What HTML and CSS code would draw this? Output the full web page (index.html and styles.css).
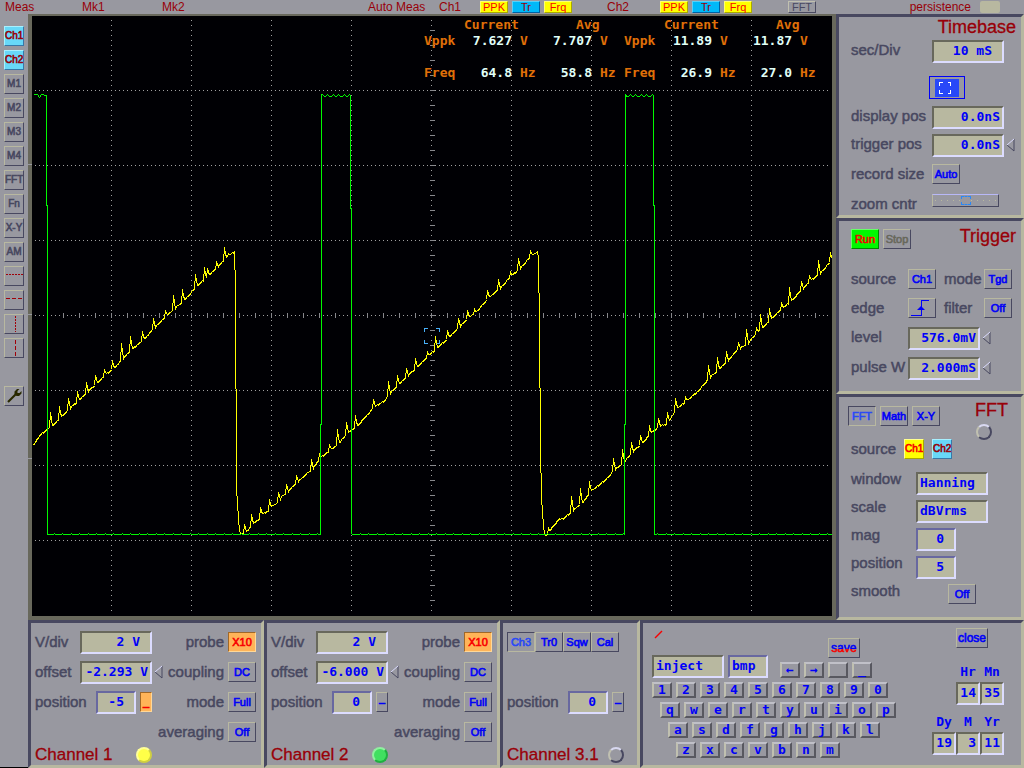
FILE: index.html
```html
<!DOCTYPE html>
<html lang="en">
<head>
  <meta charset="UTF-8">
  <title>Oscilloscope</title>
  <link rel="stylesheet" href="styles.css">
</head>
<body>
  <div class="scope">
    <header class="topbar">
      <span>Meas</span>
      <span>Mk1</span>
      <span>Mk2</span>
      <span>Auto Meas</span>
      <div class="meas-group">
        <span>Ch1</span>
        <button type="button" class="tag yellow">PPK</button>
        <button type="button" class="tag blue">Tr</button>
        <button type="button" class="tag yellow">Frq</button>
      </div>
      <div class="meas-group">
        <span>Ch2</span>
        <button type="button" class="tag yellow">PPK</button>
        <button type="button" class="tag blue">Tr</button>
        <button type="button" class="tag yellow">Frq</button>
      </div>
      <button type="button" class="tag">FFT</button>
      <div class="persist">
        <span>persistence</span>
        <button type="button" class="persist-box" aria-label="persistence"></button>
      </div>
    </header>

    <nav class="rail">
      <button type="button" class="btn tool cyan">Ch1</button>
      <button type="button" class="btn tool cyan">Ch2</button>
      <button type="button" class="btn tool">M1</button>
      <button type="button" class="btn tool">M2</button>
      <button type="button" class="btn tool">M3</button>
      <button type="button" class="btn tool">M4</button>
      <button type="button" class="btn tool">FFT</button>
      <button type="button" class="btn tool">Fn</button>
      <button type="button" class="btn tool">X-Y</button>
      <button type="button" class="btn tool">AM</button>
      <button type="button" class="btn tool" aria-label="Horizontal cursor 1">
        <svg width="18" height="18"><path class="cursor" d="M1 7.500H18" stroke-dasharray="2 1"/></svg>
      </button>
      <button type="button" class="btn tool" aria-label="Horizontal cursor 2">
        <svg width="18" height="18"><path class="cursor" d="M1 7.500H17" stroke-dasharray="4 2"/></svg>
      </button>
      <button type="button" class="btn tool" aria-label="Vertical cursor 1">
        <svg width="18" height="18"><path class="cursor" d="M10.500 1V17" stroke-dasharray="2 1"/></svg>
      </button>
      <button type="button" class="btn tool" aria-label="Vertical cursor 2">
        <svg width="18" height="18"><path class="cursor" d="M10.500 1V17" stroke-dasharray="4 2"/></svg>
      </button>
      <button type="button" class="btn tool setup" aria-label="Setup">
        <svg width="18" height="18"><path d="M3 15L11 7" stroke="#282800" stroke-width="2.200"/><path d="M9.500 7V4.500L12 2H14.500L12.500 4V6H14.500L16.500 4V6.500L14 9H11.500Z" fill="#282800"/></svg>
      </button>
    </nav>

    <main class="screen">
      <svg class="plot" viewBox="32 16 800 600" role="img" aria-label="Waveforms">
        <g id="grid" class="grid"></g>
        <path class="ticks" d="M432.500 30V612" stroke-dasharray="1 14"/>
        <path class="ticks" d="M47 315.500H828" stroke-dasharray="1 15"/>
        <path class="marker" d="M424.500 332V328.500H428M436 328.500H439.500V332M439.500 340V343.500H436M428 343.500H424.500V340"/>
        <polyline id="ch1" class="trace ch1"/>
        <polyline id="ch2" class="trace ch2"/>
      </svg>
      <div class="readouts">
        <table>
          <colgroup><col class="c-name"><col class="c-cur"><col class="c-unit"><col class="c-avg"><col class="c-unit"></colgroup>
          <tr><td></td><th colspan="2">Current</th><th colspan="2" class="avg">Avg</th></tr>
          <tr><th>Vppk</th><td>7.627</td><th>V</th><td>7.707</td><th>V</th></tr>
          <tr class="spaced"><th>Freq</th><td>64.8</td><th>Hz</th><td>58.8</td><th>Hz</th></tr>
        </table>
        <table>
          <colgroup><col class="c-name"><col class="c-cur"><col class="c-unit"><col class="c-avg"><col class="c-unit"></colgroup>
          <tr><td></td><th colspan="2">Current</th><th colspan="2" class="avg">Avg</th></tr>
          <tr><th>Vppk</th><td>11.89</td><th>V</th><td>11.87</td><th>V</th></tr>
          <tr class="spaced"><th>Freq</th><td>26.9</td><th>Hz</th><td>27.0</td><th>Hz</th></tr>
        </table>
      </div>
    </main>

    <aside class="side">
      <section class="panel timebase">
        <h2>Timebase</h2>
        <label for="secdiv">sec/Div</label>
        <input class="field inset-text" id="secdiv" value="10 mS">
        <button type="button" class="zoom-btn" aria-label="Zoom window">
          <svg width="24" height="18"><path d="M5 3.500H8M13 3.500H15.500V7M15.500 11V14.500H13M8 14.500H4.500V11M4.500 7V3" fill="none" stroke="#fff" shape-rendering="crispEdges"/></svg>
        </button>
        <label for="disppos">display pos</label>
        <input class="field" id="disppos" value="0.0nS">
        <label for="trigpos">trigger pos</label>
        <input class="field" id="trigpos" value="0.0nS">
        <svg class="arrow" width="10" height="14"><path d="M1 7L8 13V1" fill="none" stroke="#484860"/><path d="M1 7L8 1" stroke="#dcdcff"/></svg>
        <label for="recsize">record size</label>
        <button type="button" class="btn" id="recsize">Auto</button>
        <label for="zoomcntr">zoom cntr</label>
        <input type="range" id="zoomcntr" class="slider" min="0" max="100" value="50">
      </section>

      <section class="panel trigger">
        <div class="head">
          <button type="button" class="btn run">Run</button>
          <button type="button" class="btn stop">Stop</button>
          <h2>Trigger</h2>
        </div>
        <label for="tsource">source</label>
        <button type="button" class="btn" id="tsource">Ch1</button>
        <label for="tmode">mode</label>
        <button type="button" class="btn" id="tmode">Tgd</button>
        <label for="tedge">edge</label>
        <button type="button" class="btn" id="tedge" aria-label="rising edge">
          <svg width="24" height="18"><path d="M2 16.500H12V1.500H20" fill="none" stroke="#0000f8" shape-rendering="crispEdges"/><path d="M8 11L12 7L16 11Z" fill="#0000f8"/></svg>
        </button>
        <label for="tfilter">filter</label>
        <button type="button" class="btn" id="tfilter">Off</button>
        <label for="tlevel">level</label>
        <div class="wide">
          <input class="field" id="tlevel" value="576.0mV">
          <svg class="arrow" width="10" height="14"><path d="M1 7L8 13V1" fill="none" stroke="#484860"/><path d="M1 7L8 1" stroke="#dcdcff"/></svg>
        </div>
        <label for="tpulse">pulse W</label>
        <div class="wide">
          <input class="field" id="tpulse" value="2.000mS">
          <svg class="arrow" width="10" height="14"><path d="M1 7L8 13V1" fill="none" stroke="#484860"/><path d="M1 7L8 1" stroke="#dcdcff"/></svg>
        </div>
      </section>

      <section class="panel fft">
        <div class="head">
          <button type="button" class="btn active">FFT</button>
          <button type="button" class="btn">Math</button>
          <button type="button" class="btn">X-Y</button>
          <div class="fft-title">
            <h2>FFT</h2>
            <span class="led"></span>
          </div>
        </div>
        <div class="fft-source">
          <span class="label">source</span>
          <button type="button" class="btn tool yellow">Ch1</button>
          <button type="button" class="btn tool cyan">Ch2</button>
        </div>
        <div class="fft-rows">
          <label for="fwindow">window</label>
          <input class="field left" id="fwindow" value="Hanning">
          <label for="fscale">scale</label>
          <input class="field left" id="fscale" value="dBVrms">
          <label for="fmag">mag</label>
          <input class="field small inset-text" id="fmag" value="0">
          <label for="fpos">position</label>
          <input class="field small inset-text" id="fpos" value="5">
          <label for="fsmooth">smooth</label>
          <button type="button" class="btn smooth" id="fsmooth">Off</button>
        </div>
      </section>
    </aside>

    <footer class="bottom">
      <section class="panel channel">
        <div class="cols">
          <div class="col">
            <div class="row"><label for="c1div">V/div</label><input class="field inset-text" id="c1div" value="2 V"></div>
            <div class="row">
              <label for="c1off">offset</label><input class="field" id="c1off" value="-2.293 V">
              <svg class="arrow" width="10" height="14"><path d="M1 7L8 13V1" fill="none" stroke="#484860"/><path d="M1 7L8 1" stroke="#dcdcff"/></svg>
            </div>
            <div class="row"><label for="c1pos">position</label><input class="field small inset-text" id="c1pos" value="-5"><button type="button" class="btn minus orange">_</button></div>
          </div>
          <div class="col options">
            <div class="row"><label for="c1probe">probe</label><button type="button" class="btn orange" id="c1probe">X10</button></div>
            <div class="row"><label for="c1coup">coupling</label><button type="button" class="btn" id="c1coup">DC</button></div>
            <div class="row"><label for="c1mode">mode</label><button type="button" class="btn" id="c1mode">Full</button></div>
            <div class="row"><label for="c1avg">averaging</label><button type="button" class="btn" id="c1avg">Off</button></div>
          </div>
        </div>
        <div class="foot"><h2>Channel 1</h2><span class="led on-yellow"></span></div>
      </section>

      <section class="panel channel">
        <div class="cols">
          <div class="col">
            <div class="row"><label for="c2div">V/div</label><input class="field inset-text" id="c2div" value="2 V"></div>
            <div class="row">
              <label for="c2off">offset</label><input class="field" id="c2off" value="-6.000 V">
              <svg class="arrow" width="10" height="14"><path d="M1 7L8 13V1" fill="none" stroke="#484860"/><path d="M1 7L8 1" stroke="#dcdcff"/></svg>
            </div>
            <div class="row"><label for="c2pos">position</label><input class="field small inset-text" id="c2pos" value="0"><button type="button" class="btn minus">–</button></div>
          </div>
          <div class="col options">
            <div class="row"><label for="c2probe">probe</label><button type="button" class="btn orange" id="c2probe">X10</button></div>
            <div class="row"><label for="c2coup">coupling</label><button type="button" class="btn" id="c2coup">DC</button></div>
            <div class="row"><label for="c2mode">mode</label><button type="button" class="btn" id="c2mode">Full</button></div>
            <div class="row"><label for="c2avg">averaging</label><button type="button" class="btn" id="c2avg">Off</button></div>
          </div>
        </div>
        <div class="foot"><h2>Channel 2</h2><span class="led on-green"></span></div>
      </section>

      <section class="panel channel">
        <div class="cols">
          <div class="col">
            <div class="row tabs">
              <button type="button" class="btn active">Ch3</button>
              <button type="button" class="btn">Tr0</button>
              <button type="button" class="btn">Sqw</button>
              <button type="button" class="btn">Cal</button>
            </div>
            <div class="row"></div>
            <div class="row"><label for="c3pos">position</label><input class="field small inset-text" id="c3pos" value="0"><button type="button" class="btn minus">–</button></div>
          </div>
        </div>
        <div class="foot"><h2>Channel 3.1</h2><span class="led"></span></div>
      </section>

      <section class="panel keyboard">
        <div class="pad">
          <div class="file">
            <div class="names">
              <svg width="12" height="12"><path d="M3 10L10 3" stroke="#f80000" stroke-width="1.500"/></svg>
              <div class="inputs">
                <input class="field left" aria-label="File name" value="inject">
                <input class="field small left" aria-label="File type" value="bmp">
              </div>
            </div>
            <div class="save">
              <button type="button" class="btn wide-btn"><span>save</span></button>
              <div class="keys">
                <button type="button">←</button><button type="button">→</button><button type="button" aria-label="space"></button><button type="button">_</button>
              </div>
            </div>
          </div>
          <div class="keys">
            <button type="button">1</button><button type="button">2</button><button type="button">3</button><button type="button">4</button><button type="button">5</button><button type="button">6</button><button type="button">7</button><button type="button">8</button><button type="button">9</button><button type="button">0</button>
          </div>
          <div class="keys in1">
            <button type="button">q</button><button type="button">w</button><button type="button">e</button><button type="button">r</button><button type="button">t</button><button type="button">y</button><button type="button">u</button><button type="button">i</button><button type="button">o</button><button type="button">p</button>
          </div>
          <div class="keys in2">
            <button type="button">a</button><button type="button">s</button><button type="button">d</button><button type="button">f</button><button type="button">g</button><button type="button">h</button><button type="button">j</button><button type="button">k</button><button type="button">l</button>
          </div>
          <div class="keys in3">
            <button type="button">z</button><button type="button">x</button><button type="button">c</button><button type="button">v</button><button type="button">b</button><button type="button">n</button><button type="button">m</button>
          </div>
        </div>
        <div class="clock">
          <button type="button" class="btn wide-btn close">close</button>
          <div class="units">
            <label>Hr<input class="field" value="14"></label>
            <label>Mn<input class="field" value="35"></label>
          </div>
          <div class="units">
            <label>Dy<input class="field" value="19"></label>
            <label>M<input class="field" value="3"></label>
            <label>Yr<input class="field" value="11"></label>
          </div>
        </div>
      </section>
    </footer>
  </div>
  <script src="scope.js"></script>
</body>
</html>
```
FILE: styles.css
```css
* {
  box-sizing: border-box;
}
body {
  margin: 0;
  background: #9898a0;
  font-family: "Liberation Sans", Arial, sans-serif;
  color: #484860;
}
button,
input {
  font-family: inherit;
  margin: 0;
  padding: 0;
}
h2 {
  margin: 0;
  font-size: 18px;
  line-height: 20px;
  font-weight: normal;
  color: #980008;
  -webkit-text-stroke: 0.3px #980008;
}
svg {
  display: block;
}
.scope {
  display: grid;
  grid-template-columns: 28px 1fr 188px;
  grid-template-rows: 14px auto 1fr;
  min-height: 100vh;
}

/* top bar */
.topbar {
  grid-column: 1 / -1;
  display: grid;
  grid-template-columns: 77px 80px 206px 71px 168px 181px 28px 1fr;
  align-items: center;
  padding-left: 5px;
  font-size: 12px;
  line-height: 14px;
  color: #980008;
}
.meas-group {
  display: flex;
  align-items: center;
  gap: 4px;
}
.meas-group span {
  width: 37px;
}
.meas-group + .meas-group span {
  width: 49px;
}
.tag {
  width: 28px;
  height: 12px;
  border: 1px solid;
  border-color: #c0c0b0 #484860 #484860 #c0c0b0;
  background: #9898a0;
  color: #484860;
  font-size: 11px;
  line-height: 10px;
}
.tag.yellow {
  background: #ffff00;
  border-color: #ffff70 #a8a800 #a8a800 #ffff70;
  color: #f80000;
}
.tag.blue {
  background: #00b8f8;
  border-color: #58d0f8 #0060a0 #0060a0 #58d0f8;
  color: #980008;
}
.persist {
  display: flex;
  align-items: center;
  justify-content: flex-end;
  gap: 9px;
  padding-right: 24px;
}
.persist-box {
  width: 20px;
  height: 12px;
  border: 0;
  border-radius: 2px;
  background: #b8b8a0;
}

/* buttons */
.btn {
  width: 28px;
  height: 20px;
  border: 1px solid;
  border-color: #b8b8a0 #484860 #484860 #b8b8a0;
  background: #9898a0;
  color: #0000f8;
  font-size: 11px;
  line-height: 14px;
  -webkit-text-stroke: 0.6px currentColor;
  text-align: center;
  white-space: nowrap;
}
.btn.active {
  border-color: #484860 #b8b8a0 #b8b8a0 #484860;
  color: #2848f8;
}
.btn.orange {
  background: #ffb458;
  border-color: #a06828 #ffd898 #ffd898 #a06828;
  color: #f80000;
}
.btn.yellow {
  background: #ffff00;
  border-color: #ffff90 #a8a800 #a8a800 #ffff90;
  color: #f80000;
}
.btn.cyan {
  background: #68d8f8;
  border-color: #a8f0ff #3878a8 #3878a8 #a8f0ff;
  color: #980008;
}
.btn.run {
  background: #00f800;
  border-color: #68ff68 #008800 #008800 #68ff68;
  color: #f80000;
}
.btn.stop {
  color: #68685c;
}
.btn.minus {
  width: 12px;
  margin-left: 4px;
}
.btn.wide-btn {
  width: 32px;
  font-size: 12px;
}
.btn.tool {
  width: 20px;
  font-size: 10px;
}

/* left tool rail */
.rail {
  grid-row: 2 / 4;
  display: flex;
  flex-direction: column;
  gap: 4px;
  padding: 12px 4px 0;
  border-bottom: 1px solid #000;
}
.rail .btn {
  color: #484860;
}
.rail .btn.cyan {
  color: #980008;
}
.rail .setup {
  margin-top: 24px;
}
.cursor {
  stroke: #a00008;
}

/* waveform display */
.screen {
  position: relative;
  border: 4px solid #68685c;
  border-top-width: 2px;
  background: #000004;
}
/* level notches on the left edge of the bezel */
.screen::before {
  content: "";
  position: absolute;
  top: 148px;
  left: -4px;
  width: 4px;
  height: 1px;
  background: #9898a0;
  box-shadow: 0 150px #9898a0, 0 294px #9898a0;
}
.plot {
  width: 100%;
  height: auto;
}
.plot path,
.plot line,
.plot polyline {
  fill: none;
  shape-rendering: crispEdges;
}
.grid {
  stroke: #a0a0a0;
}
.ticks {
  stroke: #88888c;
  stroke-width: 5;
}
.marker {
  stroke: #48b0f8;
}
.ch1 {
  stroke: #ffff00;
}
.ch2 {
  stroke: #00f800;
}
.readouts {
  position: absolute;
  top: 1px;
  left: 49%;
  display: flex;
  font: bold 13px/16px "DejaVu Sans Mono", monospace;
}
.readouts table {
  width: 200px;
  table-layout: fixed;
  border-collapse: collapse;
}
.c-name,
.c-unit {
  width: 32px;
}
.c-cur {
  width: 56px;
}
.c-avg {
  width: 48px;
}
.readouts th,
.readouts td {
  padding: 0;
  text-align: left;
  white-space: nowrap;
}
.readouts th {
  color: #e07008;
}
.readouts td {
  color: #e0fff8;
  text-align: right;
}
.readouts td + th {
  padding-left: 8px;
}
.readouts tr .avg {
  padding-left: 32px;
}
.readouts .spaced th,
.readouts .spaced td {
  padding-top: 16px;
}

/* panels */
.panel {
  border: 3px solid;
  border-color: #484860 #b8b8a0 #b8b8a0 #484860;
}
.panel label,
.label {
  font-size: 15px;
  line-height: 20px;
  -webkit-text-stroke: 0.5px currentColor;
  white-space: nowrap;
}
.field {
  width: 72px;
  height: 23px;
  padding: 0 2px 2px;
  border: 2px solid;
  border-color: #68685c #dcdcff #dcdcff #68685c;
  border-radius: 0;
  background: #b8b8a0;
  color: #0000f8;
  font: bold 13px/16px "DejaVu Sans Mono", monospace;
  text-align: right;
  outline: 0;
}
.field.small {
  width: 40px;
  border-color: #6868a0 #dcdcff #dcdcff #6868a0;
}
.field.left {
  text-align: left;
}
.field.inset-text {
  padding-right: 10px;
}
.arrow {
  margin-left: 2px;
  margin-top: 4px;
}
.led {
  width: 16px;
  height: 16px;
  border: 2px solid;
  border-color: #d8d8f0 #484860 #484860 #c0c0b0;
  border-radius: 50%;
}
.led.on-yellow {
  background: #ffff48;
  border-color: #ffff98 #d0d040 #d0d040 #ffff98;
}
.led.on-green {
  background: #40e060;
  border-color: #90f0a0 #20b040 #20b040 #90f0a0;
}

/* right column */
.side {
  display: flex;
  flex-direction: column;
}
.timebase {
  display: grid;
  grid-template-columns: 81px 72px 1fr;
  grid-template-rows: 23px 23px 43px 28px 30px 30px 21px;
  align-items: start;
  padding-left: 12px;
}
.timebase label {
  grid-column: 1;
}
.timebase h2 {
  grid-column: 1 / -1;
  justify-self: end;
  padding-right: 5px;
}
.zoom-btn {
  grid-column: 2;
  align-self: end;
  display: grid;
  place-items: center;
  width: 36px;
  height: 23px;
  margin: 0 0 7px -3px;
  border: 1px solid #0000f8;
  background: #9898a0;
}
.zoom-btn svg {
  background: #2848f8;
}
.slider {
  appearance: none;
  width: 67px;
  height: 13px;
  border: 1px solid;
  border-color: #b8b8f8 #484860 #484860 #b8b8a0;
  background: repeating-linear-gradient(90deg, #b8b8a0 0 1px, transparent 1px 6px) 2px 5px / 100% 1px no-repeat;
}
.slider::-webkit-slider-thumb {
  appearance: none;
  width: 10px;
  height: 9px;
  border: 1px dashed #2888f8;
  background: #9898a0;
}
.head {
  display: flex;
  gap: 4px;
}
.trigger {
  display: grid;
  grid-template-columns: 57px 36px 40px 1fr;
  grid-template-rows: 40px 29px 29px 30px 34px;
  align-items: start;
  padding: 8px 0 0 12px;
}
.trigger .head {
  grid-column: 1 / -1;
}
.trigger .head h2 {
  margin: -3px 5px 0 auto;
}
.wide {
  grid-column: 2 / -1;
  display: flex;
}
.fft {
  flex: 1;
  padding-top: 9px;
}
.fft .head {
  padding: 0 13px 0 9px;
}
.fft-title {
  display: flex;
  flex-direction: column;
  align-items: center;
  margin-left: auto;
  margin-top: -6px;
}
.fft-title .led {
  margin-top: 4px;
  margin-right: 16px;
}
.fft-source {
  display: flex;
  gap: 8px;
  padding-left: 12px;
  margin-top: -1px;
}
.fft-source .label {
  width: 45px;
}
.fft-rows {
  display: grid;
  grid-template-columns: 65px 1fr;
  grid-auto-rows: 28px;
  padding: 10px 0 0 12px;
}
.fft-rows .field,
.fft-rows .smooth {
  margin-top: 3px;
}
.fft-rows .smooth {
  margin-left: 32px;
}

/* bottom row */
.bottom {
  grid-column: 2 / -1;
  display: grid;
  grid-template-columns: 236px 236px 140px 1fr;
}
.channel {
  padding: 4px 5px 0 4px;
}
.cols {
  display: flex;
  height: 120px;
}
.col {
  flex: none;
  width: 117px;
}
.row {
  position: relative;
  display: flex;
  align-items: center;
  height: 30px;
}
.row .field {
  margin-left: auto;
}
.row .arrow {
  position: absolute;
  left: 100%;
  margin-top: 0;
}
.row .btn {
  flex: none;
}
.options {
  flex: 1;
  min-width: 0;
}
.options .row {
  justify-content: flex-end;
  gap: 4px;
}
.foot {
  display: flex;
  justify-content: space-between;
  width: 117px;
  height: 18px;
}
.foot h2 {
  font-size: 17px;
  line-height: 16px;
}

/* keyboard and clock */
.keyboard {
  display: flex;
  justify-content: space-between;
  padding: 5px 17px 0 9px;
}
.pad {
  display: flex;
  flex-direction: column;
  gap: 4px;
}
.file {
  display: flex;
  gap: 12px;
}
.names {
  display: flex;
  flex-direction: column;
  justify-content: space-between;
}
.inputs {
  display: flex;
  gap: 4px;
}
.save {
  padding-top: 10px;
}
.save .wide-btn {
  display: block;
  margin: 0 0 4px 48px;
}
.save .wide-btn span {
  background: linear-gradient(#0000f8 60%, #f80000 60%);
  background-clip: text;
  color: transparent;
}
.keys {
  display: flex;
  gap: 4px;
}
.keys button {
  width: 20px;
  height: 16px;
  border: 2px solid;
  border-color: #c0c0c8 #585860 #585860 #c0c0b0;
  background: #9898a0;
  color: #0000f8;
  font: bold 13px/12px "DejaVu Sans Mono", monospace;
}
.in1 {
  padding-left: 8px;
}
.in2 {
  padding-left: 16px;
}
.in3 {
  padding-left: 24px;
}
.clock {
  width: 72px;
}
.close {
  display: block;
  margin: 0 16px 14px auto;
}
.units {
  display: flex;
  justify-content: flex-end;
  margin-bottom: 7px;
}
.panel .units label {
  display: flex;
  flex-direction: column;
  width: 24px;
  color: #0000f8;
  font: bold 13px/20px "DejaVu Sans Mono", monospace;
  -webkit-text-stroke: 0;
  text-align: center;
}
.units .field {
  width: 24px;
}
```
FILE: scope.js
```js
const LEFT = 33;
const RIGHT = 832;

// ramp baseline, [x, y]
const base = [
  [33, 444], [39, 435], [47, 428], [52, 425], [61, 416], [70, 407], [79, 399], [87, 391],
  [97, 382], [105, 374], [114, 367], [123, 357], [132, 348], [143, 339], [153, 328],
  [166, 315], [175, 307], [183, 300], [197, 285], [208, 275], [217, 266], [225, 258],
  [230, 253], [234, 251], [235, 285], [236, 488], [238, 517], [239, 530], [241, 533],
  [247, 530], [252, 523], [258, 519], [263, 512], [267, 511], [272, 505], [277, 502],
  [281, 496], [287, 491], [297, 481], [312, 468], [320, 457], [329, 450], [338, 443],
  [347, 432], [357, 425], [374, 406], [384, 400], [389, 393], [398, 384], [407, 375],
  [416, 367], [428, 355], [437, 347], [448, 337], [459, 326], [468, 317], [477, 310],
  [488, 297], [499, 288], [511, 275], [519, 268], [532, 254], [537, 251], [538, 257],
  [539, 325], [540, 446], [541, 498], [543, 524], [544, 533], [546, 535], [553, 525],
  [559, 518], [563, 518], [573, 509], [582, 502], [591, 490], [605, 479], [615, 468],
  [623, 462], [632, 451], [642, 442], [650, 433], [659, 425], [667, 423], [676, 408],
  [685, 401], [698, 390], [709, 377], [718, 369], [727, 360], [738, 348], [747, 343],
  [757, 331], [762, 327], [770, 319], [782, 307], [790, 301], [802, 288], [811, 279],
  [819, 273], [832, 259]
];

// spike tops, x: y
const spikes = {
  50: 412, 59: 406, 68: 398, 77: 391, 86: 382, 95: 375, 104: 369, 112: 360, 121: 343,
  130: 336, 142: 331, 153: 318, 165: 311, 173: 295, 182: 289, 195: 274, 204: 267,
  207: 268, 216: 262, 224: 247, 228: 253, 244: 524, 251: 514, 260: 507, 269: 499,
  278: 492, 286: 484, 296: 475, 311: 459, 319: 453, 329: 444, 337: 429, 346: 422,
  355: 415, 373: 399, 388: 381, 397: 375, 406: 368, 415: 358, 427: 352, 435: 336,
  447: 330, 458: 318, 467: 310, 474: 309, 487: 290, 498: 279, 510: 272, 518: 258,
  530: 251, 548: 528, 571: 496, 580: 488, 589: 481, 613: 458, 622: 449, 631: 442,
  640: 435, 649: 425, 658: 418, 667: 412, 675: 398, 685: 397, 708: 365, 717: 357,
  726: 351, 738: 342, 746: 329, 756: 328, 760: 314, 769: 308, 781: 303, 789: 287,
  801: 281, 809: 275, 818: 260, 830: 252
};

function baseAt(x) {
  let i = 1;
  while (i < base.length - 1 && base[i][0] < x) i++;
  const [x0, y0] = base[i - 1];
  const [x1, y1] = base[i];
  return y0 + (y1 - y0) * (x - x0) / (x1 - x0);
}

function drawRamp() {
  const pts = [];
  for (let x = LEFT; x <= RIGHT; x++) {
    let y = Math.round(baseAt(x)) + (x * 7 % 5 < 2 ? 1 : 0);
    if (spikes[x]) y = spikes[x];
    else if (spikes[x - 1]) y = Math.round((spikes[x - 1] + y) / 2);
    pts.push((x + 0.5) + ',' + (y + 0.5));
  }
  document.getElementById('ch1').setAttribute('points', pts.join(' '));
}

function flat(pts, from, to, y) {
  for (let x = from; x <= to; x++) {
    const bump = (x * x + 3 * x) % 17 === 1 ? -1 : 0;
    pts.push((x + 0.5) + ',' + (y + bump + 0.5));
  }
}

function pulseTop(pts, from, to) {
  for (let x = from; x <= to; x++) {
    const n = (x * x) % 11;
    pts.push((x + 0.5) + ',' + (n < 4 ? 96.5 : n > 8 ? 94.5 : 95.5));
  }
}

function drawPulse() {
  const pts = ['33.5,94.5', '37.5,94.5', '39.5,97.5', '41.5,94.5', '46.5,95.5', '46.5,205.5', '47.5,205.5'];
  flat(pts, 47, 320, 534);
  pts.push('320.5,424.5', '321.5,424.5', '321.5,94.5');
  pulseTop(pts, 322, 350);
  pts.push('350.5,208.5', '351.5,208.5');
  flat(pts, 351, 624, 534);
  pts.push('624.5,424.5', '625.5,424.5', '625.5,94.5');
  pulseTop(pts, 626, 653);
  pts.push('653.5,205.5', '654.5,205.5');
  flat(pts, 654, RIGHT, 534);
  document.getElementById('ch2').setAttribute('points', pts.join(' '));
}

function drawGrid() {
  let out = '';
  for (let x = 111; x <= 751; x += 80) {
    out += `<path d="M${x + 0.5} 20V612" stroke-dasharray="1 4"/>`;
  }
  for (let y = 90; y <= 540; y += 75) {
    out += `<path d="M35 ${y + 0.5}H829" stroke-dasharray="1 3"/>`;
  }
  document.getElementById('grid').innerHTML = out;
}

drawGrid();
drawRamp();
drawPulse();
```
